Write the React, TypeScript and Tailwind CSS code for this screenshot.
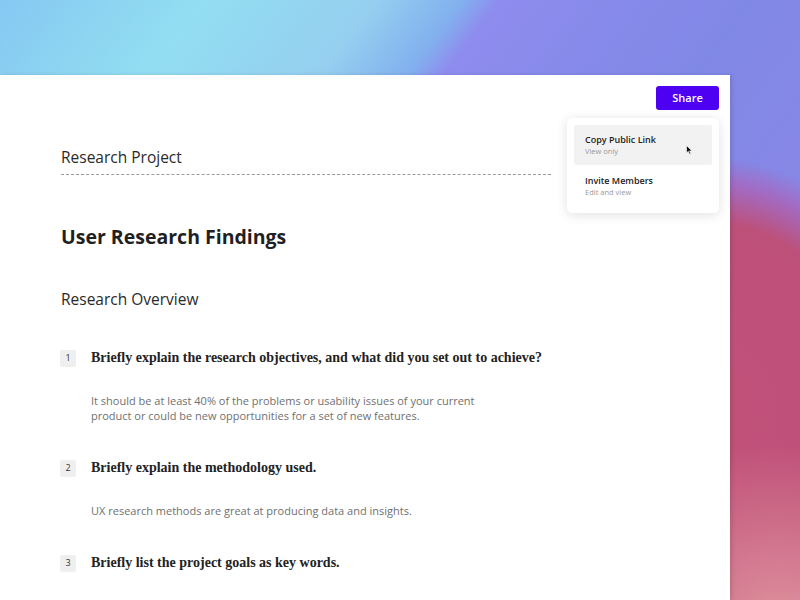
import React from "react";

const questions = [
  {
    n: "1",
    q: "Briefly explain the research objectives, and what did you set out to achieve?",
    a: [
      "It should be at least 40% of the problems or usability issues of your current",
      "product or could be new opportunities for a set of new features.",
    ],
  },
  {
    n: "2",
    q: "Briefly explain the methodology used.",
    a: ["UX research methods are great at producing data and insights."],
  },
  {
    n: "3",
    q: "Briefly list the project goals as key words.",
    a: [],
  },
];

const Question = ({
  n,
  q,
  a,
  first,
}: {
  n: string;
  q: string;
  a: string[];
  first: boolean;
}) => {
  return (
    <div className={first ? "mt-[38px]" : "mt-[35px]"}>
      <div className="flex items-center">
        <div className="w-[16px] h-[17px] -ml-[1px] rounded-[2px] bg-[#efefef] flex items-center justify-center text-[9px] text-[#333]">
          {n}
        </div>
        <h3 className="ml-[15px] font-['Liberation_Serif',serif] font-bold text-[14px] leading-[20px] text-[#222]">
          {q}
        </h3>
      </div>
      {a.length > 0 && (
        <div className="mt-[25px] pl-[30px] text-[11px] leading-[15px] text-[#707070]">
          {a.map((line) => (
            <p key={line}>{line}</p>
          ))}
        </div>
      )}
    </div>
  );
};

export default function App() {
  return (
    <div className="w-[800px] h-[600px] overflow-hidden pt-[75px] font-['Open_Sans',sans-serif] bg-[radial-gradient(ellipse_200px_180px_at_780px_625px,rgba(226,150,160,0.95),rgba(226,150,160,0)),radial-gradient(ellipse_300px_330px_at_700px_420px,#c2527a_0%,#bd5079_60%,rgba(175,95,180,0.7)_72%,rgba(150,120,220,0)_80%),linear-gradient(127deg,#86c8f2_0%,#92def1_16%,#95cff0_30%,#82b0ee_37%,#8e8cee_40%,#8088e6_60%,#8a86e6_80%)]">
      <div className="relative w-[730px] h-full bg-white shadow-[2px_0_4px_rgba(0,0,0,0.12)] pt-[11px]">
        <div className="flex justify-end pr-[11px]">
          <button className="w-[63px] h-[24px] rounded-[3px] bg-[#4d00f2] text-white text-[11px] font-semibold">
            Share
          </button>
        </div>

        <div className="absolute left-[567px] top-[43px] w-[152px] rounded-[5px] bg-white shadow-[0_2px_12px_rgba(0,0,0,0.12)] p-[7px] pb-[8px]">
          <div className="relative rounded-[2px] bg-[#f2f2f2] h-[40px] pl-[11px] pt-[9px]">
            <div className="text-[9px] leading-[12px] font-semibold text-[#222]">
              Copy Public Link
            </div>
            <div className="text-[7.5px] leading-[10px] text-[#999]">View only</div>
            <svg
              className="absolute left-[112px] top-[20px]"
              width="7"
              height="10"
              viewBox="0 0 7 10"
            >
              <path
                d="M0.5 0.5 L0.5 8 L2.3 6.3 L3.6 9.3 L4.8 8.8 L3.6 5.9 L6 5.9 Z"
                fill="#111"
                stroke="#fff"
                strokeWidth="0.6"
              />
            </svg>
          </div>
          <div className="h-[40px] pl-[11px] pt-[10px]">
            <div className="text-[9px] leading-[12px] font-semibold text-[#222]">
              Invite Members
            </div>
            <div className="text-[7.5px] leading-[10px] text-[#999]">
              Edit and view
            </div>
          </div>
        </div>

        <div className="pl-[61px]">
          <div className="w-[490px] mt-[36px] pb-[6px] border-b border-dashed border-[#9a9a9a] text-[15.5px] leading-[22px] text-[#2a2a2a]">
            Research Project
          </div>
          <h1 className="mt-[48px] text-[19.5px] leading-[28px] font-bold text-[#1f1f24]">
            User Research Findings
          </h1>
          <h2 className="mt-[37px] text-[15.5px] leading-[22px] text-[#2a2a2a]">
            Research Overview
          </h2>
          {questions.map((item, i) => (
            <Question key={item.n} {...item} first={i === 0} />
          ))}
        </div>
      </div>
    </div>
  );
}
